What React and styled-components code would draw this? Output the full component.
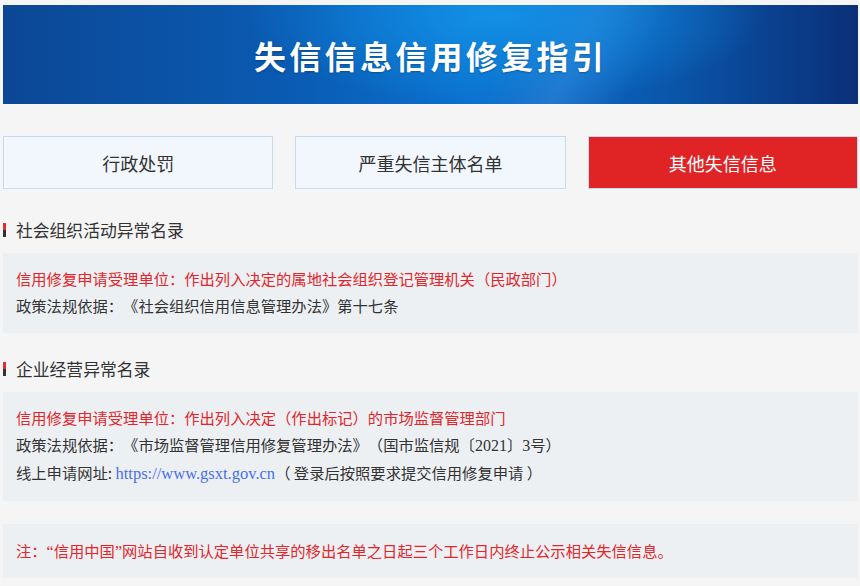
import React, { useState } from 'react';
import styled, { createGlobalStyle } from 'styled-components';

const GlobalStyle = createGlobalStyle`
body {
  margin: 0;
  background: #f5f5f5;
  font-family: "Noto Sans CJK SC", "Noto Sans", sans-serif;
  color: #333;
  text-spacing-trim: space-all;
}
`
const Page = styled.div`
padding: 5px 2px 10px 3px;
`
const Banner = styled.header`
height: 99px;
display: flex;
align-items: center;
justify-content: center;
background:
  radial-gradient(ellipse 260px 90px at 500px 10px, rgba(20,150,235,0.85), rgba(20,150,235,0) 100%),
  linear-gradient(115deg, rgba(255,255,255,0) 58%, rgba(80,150,230,0.35) 66%, rgba(255,255,255,0) 74%),
  linear-gradient(90deg, #0c4795 0%, #0a5cb4 35%, #0a72cf 55%, #0a56ab 78%, #0b2f78 100%);
`
const Title = styled.h1`
margin: 0;
color: #fff;
font-size: 32px;
font-weight: bold;
letter-spacing: 3.3px;
text-shadow: 0 1px 2px rgba(0,0,0,0.25);
`
const Tabs = styled.nav`
margin-top: 32px;
display: grid;
grid-template-columns: repeat(3, 1fr);
gap: 22px;
`
const Tab = styled.button`
height: 53px;
border: 1px solid #c6d9f1;
background: ${props => props.active ? '#e02325' : '#f2f7fe'};
color: ${props => props.active ? '#fff' : '#333'};
font-family: inherit;
font-size: 18px;
cursor: pointer;
padding: 0;
`
const Heading = styled.h2`
margin: ${props => props.first ? '29px' : '24px'} 0 11px;
display: flex;
align-items: center;
gap: 10px;
font-size: 16.8px;
font-weight: normal;
line-height: 24px;
color: #333;
&::before {
  content: "";
  width: 3px;
  height: 14px;
  background: linear-gradient(#e52b2b 50%, #333 50%);
}
`
const Box = styled.div`
background: #edf0f3;
padding: ${props => props.note ? '13px' : '12px 13px 14px'};
margin-top: ${props => props.note ? '23px' : '0'};
font-size: 15.3px;
line-height: 27px;
`
const Line = styled.div`
color: ${props => props.red ? '#e3262b' : '#333'};
white-space: nowrap;
`
const Serif = styled.span`
font-family: "Liberation Serif", serif;
font-size: 16px;
`
const Url = styled.a`
font-family: "Liberation Serif", serif;
font-size: 16.5px;
color: #4a6ef0;
text-decoration: none;
`

const tabs = ['行政处罚', '严重失信主体名单', '其他失信信息'];

const App = () => {
  const [active, setActive] = useState(2);

  return (
    <Page>
      <GlobalStyle />
      <Banner>
        <Title>失信信息信用修复指引</Title>
      </Banner>
      <Tabs>
        {tabs.map((t, i) => (
          <Tab key={t} active={i === active} onClick={() => setActive(i)}>{t}</Tab>
        ))}
      </Tabs>

      <Heading first>社会组织活动异常名录</Heading>
      <Box>
        <Line red>信用修复申请受理单位：作出列入决定的属地社会组织登记管理机关（民政部门）</Line>
        <Line>政策法规依据：《社会组织信用信息管理办法》第十七条</Line>
      </Box>

      <Heading>企业经营异常名录</Heading>
      <Box>
        <Line red>信用修复申请受理单位：作出列入决定（作出标记）的市场监督管理部门</Line>
        <Line>政策法规依据：《市场监督管理信用修复管理办法》（国市监信规〔<Serif>2021</Serif>〕<Serif>3</Serif>号）</Line>
        <Line>线上申请网址: <Url href="#">https://www.gsxt.gov.cn</Url>（ 登录后按照要求提交信用修复申请 ）</Line>
      </Box>

      <Box note>
        <Line red>注：<Serif>“</Serif>信用中国<Serif>”</Serif>网站自收到认定单位共享的移出名单之日起三个工作日内终止公示相关失信信息。</Line>
      </Box>
    </Page>
  )
}

export default App
